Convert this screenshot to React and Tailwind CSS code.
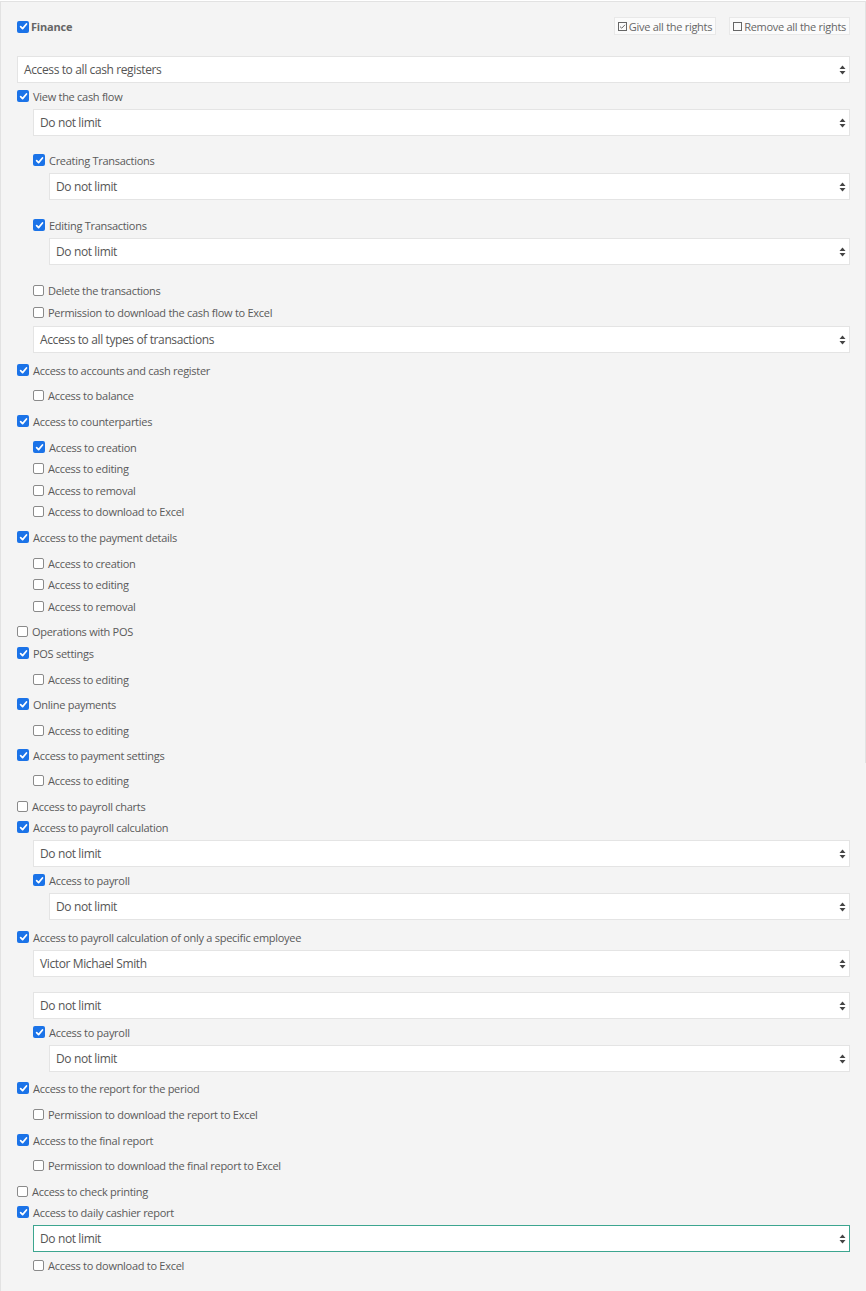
import React from "react";

const F = { fontFamily: '"Open Sans", "Noto Sans", sans-serif' };

const items = [
  { t: "s", l: 0, mt: 21, x: "Access to all cash registers" },
  { t: "r", l: 0, mt: 3, c: true, x: "View the cash flow" },
  { t: "s", l: 1, mt: 3, x: "Do not limit" },
  { t: "r", l: 1, mt: 14, c: true, x: "Creating Transactions" },
  { t: "s", l: 2, mt: 3, x: "Do not limit" },
  { t: "r", l: 1, mt: 15, c: true, x: "Editing Transactions" },
  { t: "s", l: 2, mt: 3, x: "Do not limit" },
  { t: "r", l: 1, mt: 15, x: "Delete the transactions" },
  { t: "r", l: 1, mt: 2, x: "Permission to download the cash flow to Excel" },
  { t: "s", l: 1, mt: 4, x: "Access to all types of transactions" },
  { t: "r", l: 0, mt: 7, c: true, x: "Access to accounts and cash register" },
  { t: "r", l: 1, mt: 5, x: "Access to balance" },
  { t: "r", l: 0, mt: 6, c: true, x: "Access to counterparties" },
  { t: "r", l: 1, mt: 6, c: true, x: "Access to creation" },
  { t: "r", l: 1, mt: 1, x: "Access to editing" },
  { t: "r", l: 1, mt: 2, x: "Access to removal" },
  { t: "r", l: 1, mt: 1, x: "Access to download to Excel" },
  { t: "r", l: 0, mt: 6, c: true, x: "Access to the payment details" },
  { t: "r", l: 1, mt: 6, x: "Access to creation" },
  { t: "r", l: 1, mt: 1, x: "Access to editing" },
  { t: "r", l: 1, mt: 2, x: "Access to removal" },
  { t: "r", l: 0, mt: 5, x: "Operations with POS" },
  { t: "r", l: 0, mt: 2, c: true, x: "POS settings" },
  { t: "r", l: 1, mt: 6, x: "Access to editing" },
  { t: "r", l: 0, mt: 5, c: true, x: "Online payments" },
  { t: "r", l: 1, mt: 6, x: "Access to editing" },
  { t: "r", l: 0, mt: 5, c: true, x: "Access to payment settings" },
  { t: "r", l: 1, mt: 5, x: "Access to editing" },
  { t: "r", l: 0, mt: 6, x: "Access to payroll charts" },
  { t: "r", l: 0, mt: 1, c: true, x: "Access to payroll calculation" },
  { t: "s", l: 1, mt: 3, x: "Do not limit" },
  { t: "r", l: 1, mt: 3, c: true, x: "Access to payroll" },
  { t: "s", l: 2, mt: 3, x: "Do not limit" },
  { t: "r", l: 0, mt: 7, c: true, x: "Access to payroll calculation of only a specific employee" },
  { t: "s", l: 1, mt: 3, x: "Victor Michael Smith" },
  { t: "s", l: 1, mt: 15, x: "Do not limit" },
  { t: "r", l: 1, mt: 3, c: true, x: "Access to payroll" },
  { t: "s", l: 2, mt: 3, x: "Do not limit" },
  { t: "r", l: 0, mt: 6, c: true, x: "Access to the report for the period" },
  { t: "r", l: 1, mt: 6, x: "Permission to download the report to Excel" },
  { t: "r", l: 0, mt: 6, c: true, x: "Access to the final report" },
  { t: "r", l: 1, mt: 5, x: "Permission to download the final report to Excel" },
  { t: "r", l: 0, mt: 6, x: "Access to check printing" },
  { t: "r", l: 0, mt: 1, c: true, x: "Access to daily cashier report" },
  { t: "s", l: 1, mt: 3, x: "Do not limit", focus: true },
  { t: "r", l: 1, mt: 3, x: "Access to download to Excel" },
];

const indent = ["pl-0", "pl-4", "pl-8"];

function Box({ checked }) {
  if (checked) {
    return (
      <span className="flex h-[12px] w-[12px] shrink-0 items-center justify-center rounded-[2px] bg-[#1b73e8]">
        <svg width="9" height="9" viewBox="0 0 10 10">
          <path d="M1.8 5.2 L4 7.4 L8.3 2.2" fill="none" stroke="#fff" strokeWidth="1.9" strokeLinecap="round" strokeLinejoin="round" />
        </svg>
      </span>
    );
  }
  return <span className="h-[11px] w-[11px] shrink-0 rounded-[2px] border border-[#8a8a8a] bg-white" />;
}

function Row({ it }) {
  return (
    <div className={`flex h-[20px] items-center gap-[4px] ${indent[it.l]}`} style={{ marginTop: it.mt }}>
      <Box checked={it.c} />
      <span className="text-[11px] leading-none tracking-[-0.28px] text-[#5a5a5a]">{it.x}</span>
    </div>
  );
}

function Arrows() {
  return (
    <svg width="7" height="10" viewBox="0 0 7 10" className="shrink-0">
      <path d="M3.5 0.5 L6.5 4 L0.5 4 Z" fill="#444" />
      <path d="M3.5 9.5 L6.5 6 L0.5 6 Z" fill="#444" />
    </svg>
  );
}

function Sel({ it }) {
  return (
    <div className={indent[it.l]} style={{ marginTop: it.mt }}>
      <div className={it.focus ? "bg-[#3ca58f] p-px" : "bg-[#e4e4e4] p-px"}>
        <div className="flex h-[25px] items-center justify-between bg-white pl-[6px] pr-[3px]">
          <span className="text-[12px] leading-none tracking-[-0.38px] text-[#555]">{it.x}</span>
          <Arrows />
        </div>
      </div>
    </div>
  );
}

export default function App() {
  return (
    <div className="relative bg-white pt-px" style={F}>
      <div className="min-h-[1290px] border-l border-t border-[#e2e2e2] bg-[#f4f4f4] px-4 pt-[15px] pb-6">
        <div className="flex h-[18px] items-center justify-between">
          <div className="flex items-center gap-[2px] pt-[1px]">
            <Box checked />
            <span className="text-[11px] font-bold leading-none tracking-[-0.2px] text-[#666]">Finance</span>
          </div>
          <div className="flex items-center gap-[13px]">
            <div className="flex h-[18px] items-center gap-[2px] border border-[#e8e8e8] bg-[#fbfbfb] px-[3px] text-[11px] tracking-[-0.28px] text-[#666]">
              <svg width="9" height="9" viewBox="0 0 9 9">
                <rect x="0.5" y="0.5" width="8" height="8" fill="none" stroke="#666" />
                <path d="M2 4.6 L3.7 6.2 L7 2.8" fill="none" stroke="#666" strokeWidth="1" />
              </svg>
              <span className="leading-none">Give all the rights</span>
            </div>
            <div className="flex h-[18px] items-center gap-[2px] border border-[#e8e8e8] bg-[#fbfbfb] px-[3px] text-[11px] tracking-[-0.28px] text-[#666]">
              <svg width="9" height="9" viewBox="0 0 9 9">
                <rect x="0.5" y="0.5" width="8" height="8" fill="none" stroke="#666" />
              </svg>
              <span className="leading-none">Remove all the rights</span>
            </div>
          </div>
        </div>
        {items.map((it, i) => (it.t === "s" ? <Sel key={i} it={it} /> : <Row key={i} it={it} />))}
      </div>
      <div className="absolute right-0 top-px h-[762px] w-px bg-[#e2e2e2]" />
    </div>
  );
}
